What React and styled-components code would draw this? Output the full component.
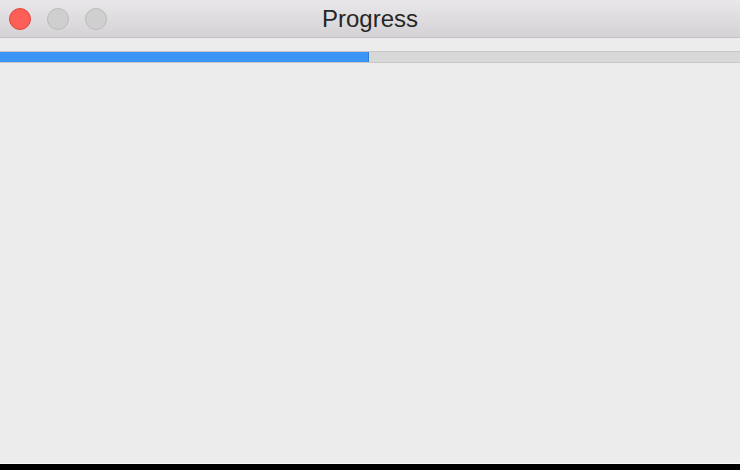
import React from "react";
import styled, { createGlobalStyle } from "styled-components";

const GlobalStyle = createGlobalStyle`
  html, body {
    margin: 0;
    padding: 0;
    background: #000;
  }
  body {
    font-family: "Liberation Sans", "Helvetica Neue", Arial, sans-serif;
  }
`;

const Window = styled.div`
  width: 740px;
  height: 464px;
  display: flex;
  flex-direction: column;
  background: #ececec;
  border-bottom: 1px solid #fafafa;
  box-sizing: border-box;
`;

const TitleBar = styled.div`
  height: 38px;
  flex-shrink: 0;
  display: flex;
  align-items: center;
  position: relative;
  background: linear-gradient(to bottom, #e9e7e9, #d4d2d4);
  border-bottom: 1px solid #c4c2c4;
  box-sizing: border-box;
`;

const Lights = styled.div`
  display: flex;
  gap: 16px;
  padding-left: 9px;
`;

const Light = styled.div`
  width: 22px;
  height: 22px;
  border-radius: 50%;
  box-sizing: border-box;
  background: ${(p) => (p.active ? "#fd5f57" : "#d0cfd0")};
  border: 1px solid ${(p) => (p.active ? "#e2453e" : "#bcbbbc")};
`;

const Title = styled.div`
  position: absolute;
  left: 0;
  right: 0;
  top: 5px;
  text-align: center;
  font-size: 24px;
  line-height: 28px;
  color: #262626;
  pointer-events: none;
`;

const Body = styled.div`
  flex: 1;
  padding-top: 13px;
`;

const Track = styled.div`
  height: 12px;
  background: #d8d8d8;
  border-top: 1px solid #c8c8c8;
  border-bottom: 1px solid #c8c8c8;
  box-sizing: border-box;
  display: flex;
`;

const Fill = styled.div`
  height: 100%;
  background: #3a95f7;
  border-right: 1px solid #2f7fd6;
`;

export default function App() {
  const progress = 0.497;
  return (
    <>
      <GlobalStyle />
      <Window>
        <TitleBar>
          <Lights>
            <Light active />
            <Light />
            <Light />
          </Lights>
          <Title>Progress</Title>
        </TitleBar>
        <Body>
          <Track>
            <Fill style={{ width: `${progress * 100}%` }} />
          </Track>
        </Body>
      </Window>
    </>
  );
}
